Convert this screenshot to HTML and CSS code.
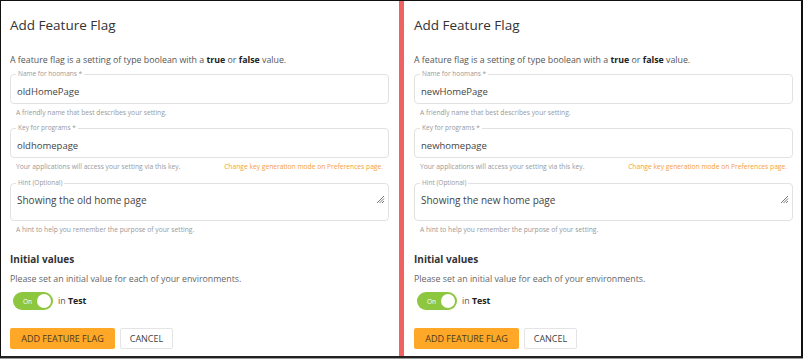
FILE: index.html
```html
<!DOCTYPE html>
<html lang="en">
<head>
    <meta charset="UTF-8">
    <title>Add Feature Flag</title>
    <link rel="stylesheet" href="styles.css">
</head>
<body>
<div class="frame">
    <div class="panel panel-left">
        <h1 class="title">Add Feature Flag</h1>
        <p class="intro">A feature flag is a setting of type boolean with a <b>true</b> or <b>false</b> value.</p>

        <fieldset class="field">
            <legend>Name for hoomans *</legend>
            <div class="value">oldHomePage</div>
        </fieldset>
        <div class="help">A friendly name that best describes your setting.</div>

        <fieldset class="field field-key">
            <legend>Key for programs *</legend>
            <div class="value">oldhomepage</div>
        </fieldset>
        <div class="help help-row">
            <span>Your applications will access your setting via this key.</span>
            <span class="link">Change key generation mode on Preferences page.</span>
        </div>

        <fieldset class="field field-hint">
            <legend>Hint (Optional)</legend>
            <div class="value value-big">Showing the old home page</div>
            <svg class="grip" width="9" height="9" viewBox="0 0 9 9"><path d="M8 1L1 8M8 3.5L3.5 8M8 6L6 8" stroke="#777" stroke-width="1"/></svg>
        </fieldset>
        <div class="help">A hint to help you remember the purpose of your setting.</div>

        <h2 class="subtitle">Initial values</h2>
        <p class="note">Please set an initial value for each of your environments.</p>
        <div class="env">
            <span class="toggle"><span class="toggle-text">On</span><span class="knob"></span></span>
            <span class="env-name">in <b>Test</b></span>
        </div>
        <div class="actions">
            <button class="btn btn-primary">ADD FEATURE FLAG</button>
            <button class="btn btn-cancel">CANCEL</button>
        </div>
    </div>

    <div class="divider"></div>

    <div class="panel panel-right">
        <h1 class="title">Add Feature Flag</h1>
        <p class="intro">A feature flag is a setting of type boolean with a <b>true</b> or <b>false</b> value.</p>

        <fieldset class="field">
            <legend>Name for hoomans *</legend>
            <div class="value">newHomePage</div>
        </fieldset>
        <div class="help">A friendly name that best describes your setting.</div>

        <fieldset class="field field-key">
            <legend>Key for programs *</legend>
            <div class="value">newhomepage</div>
        </fieldset>
        <div class="help help-row">
            <span>Your applications will access your setting via this key.</span>
            <span class="link">Change key generation mode on Preferences page.</span>
        </div>

        <fieldset class="field field-hint">
            <legend>Hint (Optional)</legend>
            <div class="value value-big">Showing the new home page</div>
            <svg class="grip" width="9" height="9" viewBox="0 0 9 9"><path d="M8 1L1 8M8 3.5L3.5 8M8 6L6 8" stroke="#777" stroke-width="1"/></svg>
        </fieldset>
        <div class="help">A hint to help you remember the purpose of your setting.</div>

        <h2 class="subtitle">Initial values</h2>
        <p class="note">Please set an initial value for each of your environments.</p>
        <div class="env">
            <span class="toggle"><span class="toggle-text">On</span><span class="knob"></span></span>
            <span class="env-name">in <b>Test</b></span>
        </div>
        <div class="actions">
            <button class="btn btn-primary">ADD FEATURE FLAG</button>
            <button class="btn btn-cancel">CANCEL</button>
        </div>
    </div>
</div>
</body>
</html>
```

FILE: styles.css
```css
body {
    margin: 0;
    background: #9a9a9a;
    font-family: "Open Sans", "Noto Sans", sans-serif;
    color: #444;
}
.frame {
    display: flex;
    width: 803px;
    height: 358px;
    box-sizing: border-box;
    border-top: 1px solid #111;
    border-left: 1px solid #111;
    border-right: 2px solid #111;
    border-bottom: 2px solid #222;
    background: white;
}
.panel {
    display: flex;
    flex-direction: column;
    box-sizing: border-box;
}
.panel-left {
    width: 398px;
    padding: 0 10px 0 9px;
}
.panel-right {
    flex: 1;
    padding: 0 8px 0 10px;
}
.divider {
    width: 5px;
    background: #f06262;
}
.title {
    margin: 15px 0 0;
    font-size: 13.5px;
    line-height: 18px;
    font-weight: 400;
    color: #333;
}
.intro {
    margin: 19px 0 0;
    font-size: 8.8px;
    line-height: 14px;
    color: #555;
}
.intro b {
    color: #222;
}
.field {
    margin: 3px 0 0;
    padding: 0 6px;
    height: 34px;
    box-sizing: border-box;
    border: 1px solid #e2e2e2;
    border-radius: 4px;
    position: relative;
}
.field legend {
    font-size: 6.5px;
    line-height: 8px;
    color: #999;
    padding: 0 2px;
    margin-left: -1px;
}
.value {
    font-size: 9.5px;
    line-height: 14px;
    color: #444;
    margin-top: 7px;
}
.value-big {
    font-size: 10px;
    margin-top: 6px;
}
.help {
    margin: 4px 0 0 6px;
    font-size: 6.7px;
    line-height: 10px;
    color: #999;
}
.help-row {
    display: flex;
    justify-content: space-between;
    margin-right: 6px;
}
.link {
    color: #f5a03a;
}
.field-key {
    margin-top: 6px;
}
.field-hint {
    margin-top: 7px;
    height: 42px;
}
.grip {
    position: absolute;
    right: 3px;
    bottom: 3px;
}
.subtitle {
    margin: 17px 0 0;
    font-size: 10px;
    line-height: 14px;
    font-weight: 700;
    color: #333;
}
.note {
    margin: 7px 0 0;
    font-size: 8.8px;
    line-height: 12px;
    color: #666;
}
.env {
    margin: 7px 0 0 3px;
    display: flex;
    align-items: center;
    gap: 5px;
}
.toggle {
    width: 40px;
    height: 18px;
    border-radius: 9px;
    background: #8dc63f;
    display: flex;
    align-items: center;
    justify-content: space-between;
    padding: 0 2px 0 10px;
    box-sizing: border-box;
}
.toggle-text {
    font-size: 6.5px;
    color: #fff;
}
.knob {
    width: 14px;
    height: 14px;
    border-radius: 50%;
    background: #fff;
}
.env-name {
    font-size: 8.8px;
    color: #555;
}
.env-name b {
    color: #222;
}
.actions {
    margin-top: 18px;
    display: flex;
    gap: 5px;
}
.btn {
    height: 21px;
    font-family: inherit;
    font-size: 9px;
    border-radius: 2px;
    padding: 0;
    cursor: pointer;
}
.btn-primary {
    background: #ffa726;
    border: none;
    color: #4a3a20;
    width: 105px;
}
.btn-cancel {
    background: #fff;
    border: 1px solid #e4e4e4;
    color: #444;
    width: 53px;
}
```
